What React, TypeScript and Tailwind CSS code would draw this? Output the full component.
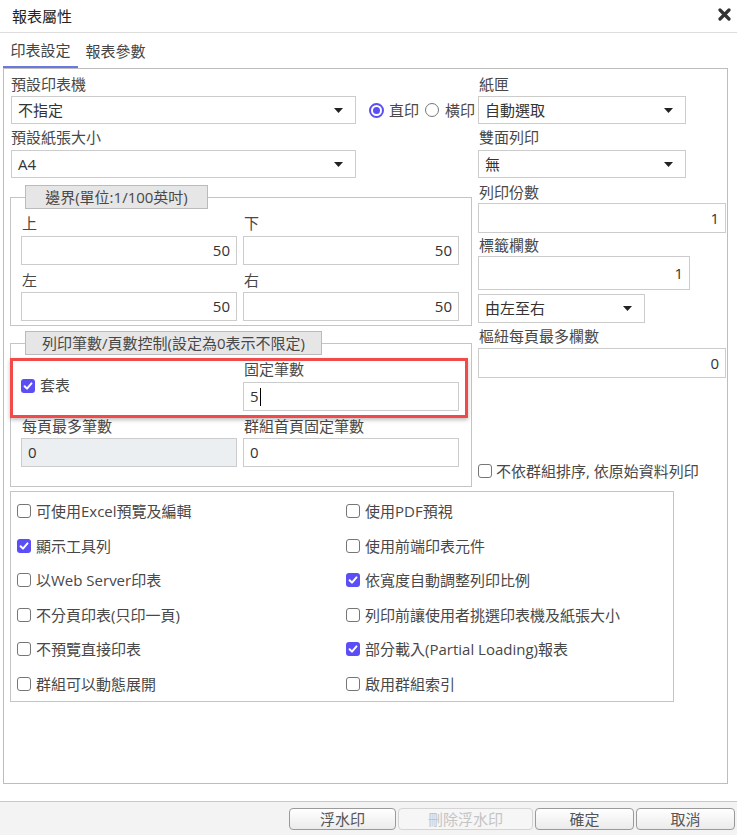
import { clsx } from "clsx";
import type { ReactNode } from "react";

// Small filled triangle used by the dropdowns
function Caret() {
  return (
    <svg width="9" height="5" viewBox="0 0 9 5" className="shrink-0">
      <path d="M0 0H9L4.5 5Z" fill="#222" />
    </svg>
  );
}

function Select({ value, className }: { value: string; className?: string }) {
  return (
    <div
      className={clsx(
        "flex shrink-0 items-center justify-between border border-[#ccc] bg-white pl-[6px] pr-[12px] text-[#333]",
        className
      )}
    >
      <span>{value}</span>
      <Caret />
    </div>
  );
}

interface InputProps {
  value: string;
  className?: string;
  left?: boolean;
  disabled?: boolean;
  caret?: boolean;
}

function TextInput({ value, className, left, disabled, caret }: InputProps) {
  return (
    <div
      className={clsx(
        "flex items-center border border-[#ccc] text-[#333]",
        left ? "justify-start pl-[6px]" : "justify-end pr-[6px]",
        disabled ? "bg-[#eceff1]" : "bg-white",
        className
      )}
    >
      <span>{value}</span>
      {caret && <span className="ml-[1px] h-[18px] w-[1px] bg-black" />}
    </div>
  );
}

function Label({ children, className }: { children: ReactNode; className?: string }) {
  return <div className={clsx("pl-[1px] leading-[20px] whitespace-nowrap text-[#484848]", className)}>{children}</div>;
}

function Check({ checked }: { checked?: boolean }) {
  return checked ? (
    <span className="flex h-[14px] w-[14px] shrink-0 items-center justify-center rounded-[3px] bg-[#5b4ef5]">
      <svg width="10" height="10" viewBox="0 0 10 10">
        <path
          d="M1.6 5.3 4 7.6 8.5 2.4"
          fill="none"
          stroke="#fff"
          strokeWidth="2"
          strokeLinecap="round"
          strokeLinejoin="round"
        />
      </svg>
    </span>
  ) : (
    <span className="h-[14px] w-[14px] shrink-0 rounded-[3px] border border-[#767676] bg-white" />
  );
}

function CheckItem({ checked, children }: { checked?: boolean; children: ReactNode }) {
  return (
    <div className="flex h-[34.5px] items-center gap-[5px] whitespace-nowrap text-[#484848]">
      <Check checked={checked} />
      <span className="leading-[20px]">{children}</span>
    </div>
  );
}

// Fieldset with grey tab-like legend
function Group({
  legend,
  legendWidth,
  className,
  children,
}: {
  legend: string;
  legendWidth: string;
  className?: string;
  children: ReactNode;
}) {
  return (
    <div className={className}>
      <div
        className={clsx(
          "relative z-10 ml-[15px] flex h-[24px] items-center justify-center border border-[#bbb] bg-[#e6e6e6] whitespace-nowrap text-[#484848]",
          legendWidth
        )}
      >
        {legend}
      </div>
      <div className="relative -mt-[12px] w-[462px] border border-[#c4c4c4] pl-[10px] pt-[11px]">{children}</div>
    </div>
  );
}

const leftOptions: [string, boolean][] = [
  ["可使用Excel預覽及編輯", false],
  ["顯示工具列", true],
  ["以Web Server印表", false],
  ["不分頁印表(只印一頁)", false],
  ["不預覽直接印表", false],
  ["群組可以動態展開", false],
];

const rightOptions: [string, boolean][] = [
  ["使用PDF預視", false],
  ["使用前端印表元件", false],
  ["依寬度自動調整列印比例", true],
  ["列印前讓使用者挑選印表機及紙張大小", false],
  ["部分載入(Partial Loading)報表", true],
  ["啟用群組索引", false],
];

export default function App() {
  return (
    <div className="flex h-[835px] w-[737px] flex-col overflow-hidden bg-white font-['Open_Sans','Noto_Sans_CJK_TC',sans-serif] text-[15px] text-[#333]">
      {/* Title bar */}
      <div className="flex h-[33px] shrink-0 items-center justify-between border-b border-[#ddd] pl-[12px] pr-[6px]">
        <span className="text-[#222]">報表屬性</span>
        <svg width="13" height="13" viewBox="0 0 13 13" className="mb-[3px]">
          <path d="M2 2L11 11M11 2L2 11" stroke="#333" strokeWidth="3.2" strokeLinecap="round" />
        </svg>
      </div>

      {/* Tabs */}
      <div className="flex h-[35px] shrink-0 pl-[3px]">
        <div className="flex w-[75px] items-center justify-center border-b-2 border-[#6a78e0] pt-[2px] text-[#444]">
          印表設定
        </div>
        <div className="flex w-[75px] items-center justify-center pt-[2px] text-[#444]">報表參數</div>
      </div>

      {/* Tab panel */}
      <div className="ml-[3px] flex h-[716px] w-[725px] shrink-0 flex-col border border-[#bdbdbd] pl-[6px]">
        <div className="flex gap-[5px]">
          {/* Left column */}
          <div className="flex w-[463px] shrink-0 flex-col">
            <Label className="pt-[5px] pb-[2px]">預設印表機</Label>
            <div className="flex h-[28px] items-center">
              <Select value="不指定" className="ml-[1px] h-[28px] w-[345px]" />
              <div className="ml-[13px] flex shrink-0 items-center whitespace-nowrap text-[#484848]">
                <span className="flex h-[15px] w-[15px] shrink-0 items-center justify-center rounded-full border-2 border-[#5b4ef5] bg-white">
                  <span className="h-[7px] w-[7px] rounded-full bg-[#5b4ef5]" />
                </span>
                <span className="ml-[5px]">直印</span>
                <span className="ml-[6px] h-[14px] w-[14px] shrink-0 rounded-full border border-[#767676] bg-white" />
                <span className="ml-[6px]">橫印</span>
              </div>
            </div>
            <Label className="pt-[3px] pb-[3px]">預設紙張大小</Label>
            <Select value="A4" className="ml-[1px] h-[28px] w-[345px]" />

            <Group legend="邊界(單位:1/100英吋)" legendWidth="w-[183px]" className="mt-[7px]">
              <div className="grid grid-cols-[216px_216px] gap-x-[6px] pb-[4px]">
                <Label className="pt-[4px] pb-[3px]">上</Label>
                <Label className="pt-[4px] pb-[3px]">下</Label>
                <TextInput value="50" className="h-[29px]" />
                <TextInput value="50" className="h-[29px]" />
                <Label className="pt-[5px] pb-[2px]">左</Label>
                <Label className="pt-[5px] pb-[2px]">右</Label>
                <TextInput value="50" className="h-[29px]" />
                <TextInput value="50" className="h-[29px]" />
              </div>
            </Group>

            <Group legend="列印筆數/頁數控制(設定為0表示不限定)" legendWidth="w-[297px]" className="mt-[5px]">
              <div className="grid grid-cols-[216px_216px] gap-x-[6px] pb-[19px]">
                <div className="row-span-2 flex items-center gap-[5px] pt-[5px]">
                  <Check checked />
                  <span className="text-[#484848]">套表</span>
                </div>
                <Label className="pt-[4px] pb-[3px]">固定筆數</Label>
                <TextInput value="5" left caret className="h-[29px]" />
                <Label className="pt-[5px] pb-[2px]">每頁最多筆數</Label>
                <Label className="pt-[5px] pb-[2px]">群組首頁固定筆數</Label>
                <TextInput value="0" left disabled className="h-[29px]" />
                <TextInput value="0" left className="h-[29px]" />
              </div>
              {/* Red highlight annotation */}
              <div className="pointer-events-none absolute left-[-1px] top-[14px] h-[60px] w-[458px] border-[3px] border-[#f04a4a] shadow-[0_2px_4px_rgba(0,0,0,0.25)]" />
            </Group>
          </div>

          {/* Right column */}
          <div className="flex w-[248px] shrink-0 flex-col">
            <Label className="pt-[5px] pb-[2px]">紙匣</Label>
            <Select value="自動選取" className="h-[28px] w-[208px]" />
            <Label className="pt-[3px] pb-[3px]">雙面列印</Label>
            <Select value="無" className="h-[28px] w-[208px]" />
            <Label className="pt-[4px] pb-[1px]">列印份數</Label>
            <TextInput value="1" className="h-[30px] w-[248px]" />
            <Label className="pt-[2px] pb-[1px]">標籤欄數</Label>
            <TextInput value="1" className="h-[34px] w-[212px]" />
            <Select value="由左至右" className="mt-[4px] h-[29px] w-[167px]" />
            <Label className="pt-[3px] pb-[2px]">樞紐每頁最多欄數</Label>
            <TextInput value="0" className="h-[30px] w-[248px]" />
            <div className="mt-auto mb-[6px] flex h-[20px] items-center gap-[4px] whitespace-nowrap">
              <Check />
              <span className="text-[#484848]">不依群組排序, 依原始資料列印</span>
            </div>
          </div>
        </div>

        {/* Option checkboxes */}
        <div className="mt-[4px] grid w-[664px] grid-cols-[329px_1fr] border border-[#c4c4c4] pl-[6px] pt-[2px]">
          {leftOptions.map(([text, checked], i) => [
            <CheckItem key={`l${i}`} checked={checked}>
              {text}
            </CheckItem>,
            <CheckItem key={`r${i}`} checked={rightOptions[i][1]}>
              {rightOptions[i][0]}
            </CheckItem>,
          ])}
        </div>
      </div>

      {/* Footer buttons */}
      <div className="mt-[17px] flex flex-1 items-start justify-end gap-[2px] border-t border-[#c8c8c8] bg-[#f3f3f3] pr-[2px] pt-[6px]">
        <FooterButton className="w-[107px]">浮水印</FooterButton>
        <FooterButton className="w-[135px]" disabled>
          刪除浮水印
        </FooterButton>
        <FooterButton className="w-[99px]">確定</FooterButton>
        <FooterButton className="w-[99px]">取消</FooterButton>
      </div>
    </div>
  );
}

function FooterButton({
  children,
  className,
  disabled,
}: {
  children: ReactNode;
  className?: string;
  disabled?: boolean;
}) {
  return (
    <button
      className={clsx(
        "flex h-[22px] items-center justify-center rounded-[4px] border text-[15px] leading-none",
        disabled
          ? "border-[#d4d4d4] bg-[#f6f6f6] text-[#c4c4c4]"
          : "border-[#9a9a9a] bg-gradient-to-b from-white to-[#ebebeb] text-[#555]",
        className
      )}
    >
      {children}
    </button>
  );
}
